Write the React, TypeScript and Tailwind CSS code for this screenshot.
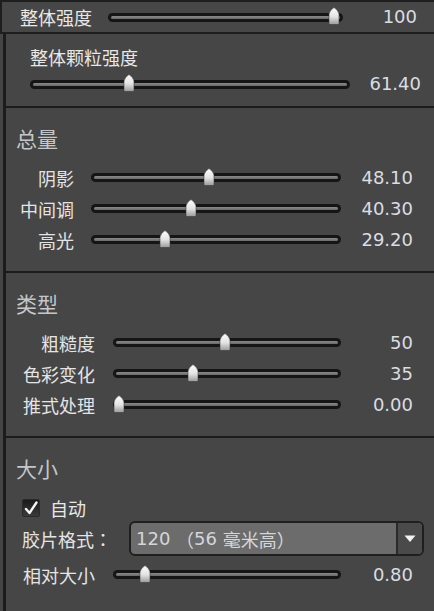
import React from "react";

const FONT = "font-['DejaVu_Sans','Noto_Sans_CJK_SC',sans-serif]";
const CJK = "font-['Noto_Sans_CJK_SC','Noto_Sans_CJK_JP',sans-serif]";
const JP = "font-['Noto_Sans_CJK_JP','Noto_Sans_CJK_SC',sans-serif]";

function Thumb({ pos }: { pos: number }) {
  return (
    <svg
      width="12"
      height="18"
      viewBox="0 0 12 18"
      className="absolute top-0"
      style={{ left: pos - 6 }}
    >
      <defs>
        <linearGradient id="tg" x1="0" y1="0" x2="0" y2="1">
          <stop offset="0" stopColor="#ffffff" />
          <stop offset="0.55" stopColor="#e2e2e2" />
          <stop offset="1" stopColor="#9a9a9a" />
        </linearGradient>
      </defs>
      <path
        d="M1 7 Q1.5 3.5 6 0.5 Q10.5 3.5 11 7 V17.5 H1 Z"
        fill="url(#tg)"
        stroke="#3a3a3a"
        strokeWidth="0.6"
      />
    </svg>
  );
}

function Track({ w, pos }: { w: string; pos: number }) {
  return (
    <div className={`relative h-[20px] flex items-center shrink-0 ${w}`}>
      <div className="h-[9px] w-full rounded-full bg-[#151515] p-[3px]">
        <div className="h-full w-full rounded-full bg-gradient-to-b from-[#8a8a8a] to-[#6a6a6a]" />
      </div>
      <Thumb pos={pos} />
    </div>
  );
}

function Row2({ label, pos, value }: { label: string; pos: number; value: string }) {
  return (
    <div className="flex h-[31px] items-center">
      <div className={`w-[68px] text-right text-[18px] leading-[24px] text-[#e4e4e4] ${CJK}`}>{label}</div>
      <div className="w-[17px]" />
      <Track w="w-[250px]" pos={pos} />
      <div className="w-[72px] text-right text-[18px] leading-[24px] text-[#dadde2]">{value}</div>
    </div>
  );
}

function Row3({ label, pos, value }: { label: string; pos: number; value: string }) {
  return (
    <div className="flex h-[31px] items-center">
      <div className={`w-[89px] text-right text-[18px] leading-[24px] text-[#e4e4e4] whitespace-nowrap ${CJK}`}>{label}</div>
      <div className="w-[18px]" />
      <Track w="w-[228px]" pos={pos} />
      <div className="w-[72px] text-right text-[18px] leading-[24px] text-[#dadde2]">{value}</div>
    </div>
  );
}

function Title({ children }: { children: React.ReactNode }) {
  return (
    <div className={`pl-[10px] pt-[16px] text-[21px] leading-[28px] text-[#c4c6c9] ${CJK}`}>{children}</div>
  );
}

function Sep() {
  return <div className="h-[2px] bg-[#1c1c1c]" />;
}

export default function App() {
  return (
    <div className={`w-[434px] h-[611px] overflow-hidden bg-[#454545] ${FONT}`}>
      {/* top row */}
      <div className="flex h-[34px] items-center border-t-2 border-b-2 border-l-2 border-[#1e1e1e] bg-[#474747]">
        <div className={`w-[106px] pl-[18px] text-[18px] leading-[24px] text-[#e8e8e8] whitespace-nowrap ${CJK}`}>整体强度</div>
        <Track w="w-[235px]" pos={226} />
        <div className="flex-1 pr-[17px] text-right text-[18px] leading-[24px] text-[#dadde2]">100</div>
      </div>

      <div className="flex">
        <div className="w-[3px] bg-[#454545]" />
        <div className="flex-1 border-l-[3px] border-[#1c1c1c] bg-[#464646]">
          {/* section 1 */}
          <div className="h-[72px]">
            <div className={`pl-[24px] pt-[11px] text-[18px] leading-[24px] text-[#e8e8e8] ${CJK}`}>整体颗粒强度</div>
            <div className="mt-[3px] flex items-center pl-[24px]">
              <Track w="w-[320px]" pos={99} />
              <div className="flex-1 pr-[13px] text-right text-[18px] leading-[24px] text-[#dadde2]">61.40</div>
            </div>
          </div>
          <Sep />

          {/* section 2 */}
          <div className="h-[163px]">
            <Title>总量</Title>
            <div className="mt-[10px]">
              <Row2 label="阴影" pos={118} value="48.10" />
              <Row2 label="中间调" pos={100} value="40.30" />
              <Row2 label="高光" pos={74} value="29.20" />
            </div>
          </div>
          <Sep />

          {/* section 3 */}
          <div className="h-[163px]">
            <Title>类型</Title>
            <div className="mt-[10px]">
              <Row3 label="粗糙度" pos={112} value="50" />
              <Row3 label="色彩变化" pos={80} value="35" />
              <Row3 label="推式处理" pos={6} value="0.00" />
            </div>
          </div>
          <Sep />

          {/* section 4 */}
          <div className="h-[173px]">
            <Title>大小</Title>
            <div className="mt-[14px] flex h-[24px] items-center pl-[16px]">
              <div className="h-[18px] w-[18px] rounded-[2px] border border-[#2a2a2a] bg-gradient-to-b from-[#1a1a1a] to-[#3a3a3a] flex items-center justify-center">
                <svg width="14" height="14" viewBox="0 0 14 14">
                  <path d="M2 8 L5.5 12 L12.5 1.5" fill="none" stroke="#f4f4f4" strokeWidth="2.4" strokeLinecap="round" strokeLinejoin="round" />
                </svg>
              </div>
              <div className={`ml-[10px] text-[18px] leading-[24px] text-[#e8e8e8] ${CJK}`}>自动</div>
            </div>
            <div className="mt-[1px] flex h-[35px] items-center pl-[16px]">
              <div className={`w-[107px] text-[18px] leading-[24px] text-[#e4e4e4] whitespace-nowrap ${CJK}`}>
                胶片格式<span className={JP}>：</span>
              </div>
              <div className="flex h-[35px] w-[295px] overflow-hidden rounded-[6px] border-2 border-[#1f1f1f] bg-[#6c6c6c]">
                <div className="flex flex-1 items-center pl-[5px] text-[18px] leading-[24px] text-[#d4d6d9] whitespace-pre">
                  {"120 "}
                  <span className={JP}>（</span>
                  {"56 "}
                  <span className={CJK}>毫米高</span>
                  <span className={JP}>）</span>
                </div>
                <div className="flex w-[26px] items-center justify-center border-l-2 border-[#2a2a2a] bg-[#4a4a4a]">
                  <svg width="12" height="8" viewBox="0 0 12 8">
                    <path d="M0.5 0.5 H11.5 L6 7 Z" fill="#f2f2f2" />
                  </svg>
                </div>
              </div>
            </div>
            <div className="mt-[3px]">
              <Row3 label="相对大小" pos={32} value="0.80" />
            </div>
          </div>
        </div>
      </div>
    </div>
  );
}
